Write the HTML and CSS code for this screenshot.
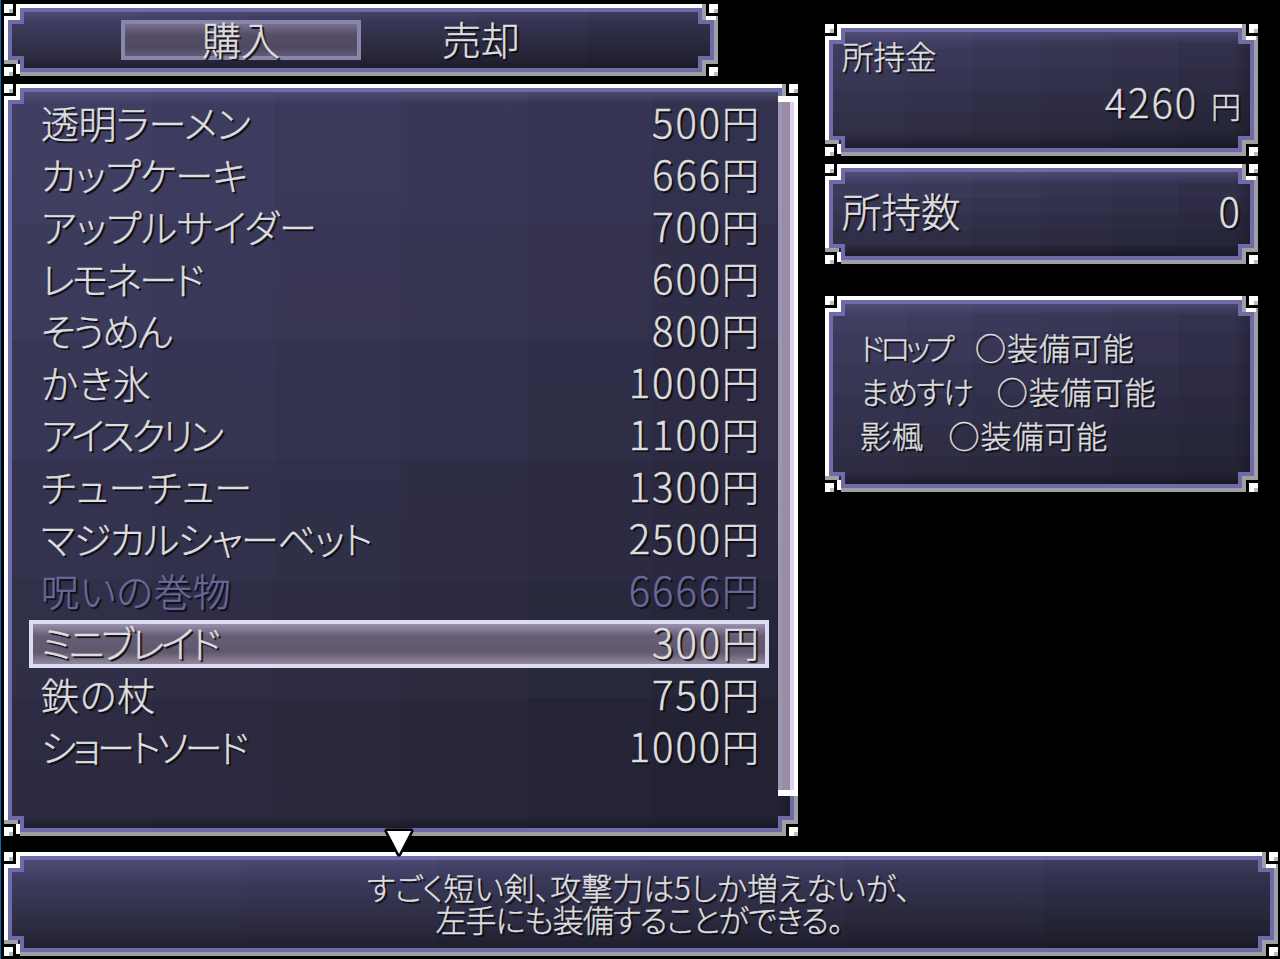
FILE: index.html
```
<!DOCTYPE html>
<html lang="ja">
  <head>
    <meta charset="UTF-8" />
    <meta name="viewport" content="width=device-width, initial-scale=1.0" />
    <title>ショップ</title>
    <link rel="stylesheet" href="styles.css">
  </head>
  <body>
    <div class="shop">
      <div class="left">
        <nav class="window tabs">
          <div class="tab active">購入</div>
          <div class="tab">売却</div>
        </nav>

        <div class="window list">
          <ul>
            <li><span class="n1">透明ラーメン</span><b>500<i>円</i></b></li>
            <li><span class="n2">カップケーキ</span><b>666<i>円</i></b></li>
            <li><span class="n3">アップルサイダー</span><b>700<i>円</i></b></li>
            <li><span class="n4">レモネード</span><b>600<i>円</i></b></li>
            <li><span class="n5">そうめん</span><b>800<i>円</i></b></li>
            <li><span class="n6">かき氷</span><b>1000<i>円</i></b></li>
            <li><span class="n7">アイスクリン</span><b>1100<i>円</i></b></li>
            <li><span class="n8">チューチュー</span><b>1300<i>円</i></b></li>
            <li><span class="n9">マジカルシャーベット</span><b>2500<i>円</i></b></li>
            <li class="disabled"><span class="n10">呪いの巻物</span><b>6666<i>円</i></b></li>
            <li class="selected"><span class="n11">ミニブレイド</span><b>300<i>円</i></b></li>
            <li><span class="n12">鉄の杖</span><b>750<i>円</i></b></li>
            <li><span class="n13">ショートソード</span><b>1000<i>円</i></b></li>
          </ul>
          <div class="scrollbar"></div>
          <svg class="more" width="30" height="30" viewBox="0 0 30 30">
            <path d="M3 3H27L15 26Z" fill="#fff" stroke="#000" stroke-width="5" stroke-linejoin="round" paint-order="stroke" />
          </svg>
        </div>
      </div>

      <div class="right">
        <div class="window money">
          <div class="label">所持金</div>
          <div class="amount">4260<span>円</span></div>
        </div>
        <div class="window count">
          <div>所持数</div>
          <div class="num">0</div>
        </div>
        <div class="window equip">
          <p><span class="e1">ドロップ</span><em>○装備可能</em></p>
          <p><span class="e2">まめすけ</span><em>○装備可能</em></p>
          <p><span class="e3">影楓</span><em>○装備可能</em></p>
        </div>
      </div>

      <div class="window help">
        <p class="line1">すごく短い剣、攻撃力は5しか増えないが、</p>
        <p class="line2">左手にも装備することができる。</p>
      </div>
    </div>
  </body>
</html>
```
FILE: styles.css
```
* {
  box-sizing: border-box;
  margin: 0;
  padding: 0;
}

body {
  height: 959px;
  overflow: hidden;
  background: #000;
  border-left: 1px solid #0b69b4;
  color: #dedede;
  font-family: "Noto Sans CJK JP", sans-serif;
  font-weight: 300;
  font-feature-settings: "palt";
  text-shadow: 2px 2px 1px #0c0c14;
  -webkit-text-stroke: 0.4px;
  white-space: nowrap;
}

.shop {
  display: grid;
  grid-template-columns: 794px 433px;
  grid-template-rows: 832px 104px;
  column-gap: 27px;
  row-gap: 16px;
  padding: 4px 0 0 3px;
}

.left {
  display: flex;
  flex-direction: column;
  gap: 8px;
}

/* window frame: notched corners with a small square in each */
.window {
  position: relative;
  border: 24px solid transparent;
  border-image: url("data:image/svg+xml,%3Csvg xmlns='http://www.w3.org/2000/svg' width='72' height='72' shape-rendering='crispEdges'%3E%3Cpath fill='%23000' d='M0 0H72V72H0ZM12 4H60V12H68V60H60V68H12V60H4V12H12Z' fill-rule='evenodd'/%3E%3Cg fill='none' stroke-width='4'%3E%3Cpath stroke='%236d6ba8' d='M18 6H54V18H66V54H54V66H18V54H6V18H18Z'/%3E%3Cpath stroke='%23fff' d='M2 60V14H14V2H60'/%3E%3Cpath stroke='%23a0a0a4' d='M58 0V14H70V58H58V70H16M0 58H14'/%3E%3Cpath stroke='%23fff' d='M60 14H70M14 60V70'/%3E%3C/g%3E%3Cpath fill='%23fff' d='M0 0H9V9H0ZM63 0H72V9H63ZM0 63H9V72H0ZM63 63H72V72H63Z'/%3E%3Cpath fill='%23bcbcbc' d='M5 5H9V9H5ZM68 5H72V9H68ZM5 68H9V72H5ZM68 68H72V72H68Z'/%3E%3C/svg%3E") 24;
  background:
    linear-gradient(#5f5b8c80 8px, transparent 20px calc(100% - 20px), #0f0e1680 calc(100% - 8px)) border-box,
    linear-gradient(90deg, transparent calc(100% - 24px), #0f0e1650 calc(100% - 8px)) border-box,
    linear-gradient(90deg, transparent 18.6%, #00000009 18.6% 34%, #00000013 34% 50%, #0000001d 50% 66%, #00000028 66% 81.6%, #00000033 81.6%) border-box,
    linear-gradient(transparent 18.6%, #0000000e 18.6% 34%, #0000001c 34% 50%, #0000002a 50% 66%, #00000038 66% 81.6%, #00000048 81.6%) border-box,
    linear-gradient(#403e62, #3d3c5a) border-box;
}

.tabs {
  display: flex;
  width: 714px;
  height: 72px;
}
.tabs,
.help {
  background:
    linear-gradient(90deg, transparent 18.6%, #00000009 18.6% 34%, #00000013 34% 50%, #0000001d 50% 66%, #00000028 66% 81.6%, #00000033 81.6%) border-box,
    linear-gradient(#4e4b76 8px, #3f3d61 25%, #35344f 50%, #2b2a40 75%, #20202f calc(100% - 8px)) border-box;
}
.tab {
  width: 240px;
  height: 40px;
  margin-top: -8px;
  font-size: 39px;
  line-height: 37px;
  text-align: center;
}
.tab:first-child {
  margin-left: 93px;
}
.tab.active {
  line-height: 29px;
  border: 4px solid #8886ab;
  background: linear-gradient(#77708f, #554e67 35%, #504961 75%, #625b75);
}

.list {
  height: 752px;
}
.list ul {
  list-style: none;
  margin: -8px 0 0 -1px;
  width: 744px;
}
.list li {
  display: flex;
  justify-content: space-between;
  height: 48px;
  margin: 0 2px 4px;
  padding: 0 10px 0 12px;
  font-size: 38px;
  line-height: 44px;
}
.list b {
  margin-top: -1px;
  font-weight: 300;
  font-size: 40px;
  letter-spacing: 1.9px;
}
.list i {
  font-style: normal;
  font-size: 37px;
  letter-spacing: 0;
}
.list .disabled {
  color: #6a6899;
}
.list .selected {
  border: 4px solid #dedbf2;
  padding: 0 6px 0 8px;
  line-height: 36px;
  background: linear-gradient(#9991ad, #675e76 30%, #62586e 70%, #92899f);
}

/* spacing of the item names */
.n1 { letter-spacing: -0.4px; }
.n2 { letter-spacing: -0.3px; }
.n3 { letter-spacing: 0; }
.n4 { letter-spacing: -2.5px; }
.n5 { letter-spacing: -2.5px; }
.n6 { letter-spacing: 0.9px; }
.n7 { letter-spacing: -3.2px; }
.n8 { letter-spacing: 0.5px; }
.n9 { letter-spacing: -1.3px; }
.n10 { letter-spacing: 0.8px; }
.n11 { letter-spacing: -3.3px; }
.n12 { letter-spacing: 0.8px; }
.n13 { letter-spacing: -3.5px; }

.scrollbar {
  position: absolute;
  right: -24px;
  top: -12px;
  width: 20px;
  height: 700px;
  border: solid #fff;
  border-width: 6px 4px 6px 0;
  background: linear-gradient(90deg, #9998b2 4px, #9b8ba4 4px 12px, #ddd0f5 12px);
}
.more {
  position: absolute;
  left: 356px;
  bottom: -46px;
  z-index: 1;
}

.right {
  padding-top: 20px;
}
.money {
  height: 132px;
  margin-bottom: 8px;
}
.money .label {
  margin: -9px 0 0 -7px;
  font-size: 31.5px;
  line-height: 32px;
}
.amount {
  margin: 12px -7px 0 0;
  text-align: right;
  font-size: 40px;
  line-height: 36px;
  letter-spacing: 1.9px;
}
.amount span {
  margin-left: 13px;
  font-size: 30px;
  letter-spacing: 0;
}

.count {
  display: flex;
  justify-content: space-between;
  height: 100px;
  font-size: 39.5px;
  line-height: 44px;
}
.count div:first-child {
  margin-left: -7px;
}
.count .num {
  margin-right: -6px;
  font-size: 40px;
}

.equip {
  height: 196px;
  margin-top: 32px;
  padding: 5px 0 0 11px;
  font-size: 31px;
}
.equip p {
  line-height: 44px;
}
.equip em {
  font-style: normal;
  margin-left: 25px;
  letter-spacing: 0.9px;
}
.e1 { letter-spacing: -4.4px; }
.e2 { letter-spacing: -1.5px; }
.e3 { letter-spacing: 0.8px; }

.help {
  grid-column: 1 / 3;
  width: 1274px;
  text-align: center;
  font-size: 31px;
}
.help p {
  margin-left: -4px;
  line-height: 32px;
}
.help .line1 {
  margin-top: -5px;
}
.help .line2 {
  letter-spacing: -1px;
}
```
